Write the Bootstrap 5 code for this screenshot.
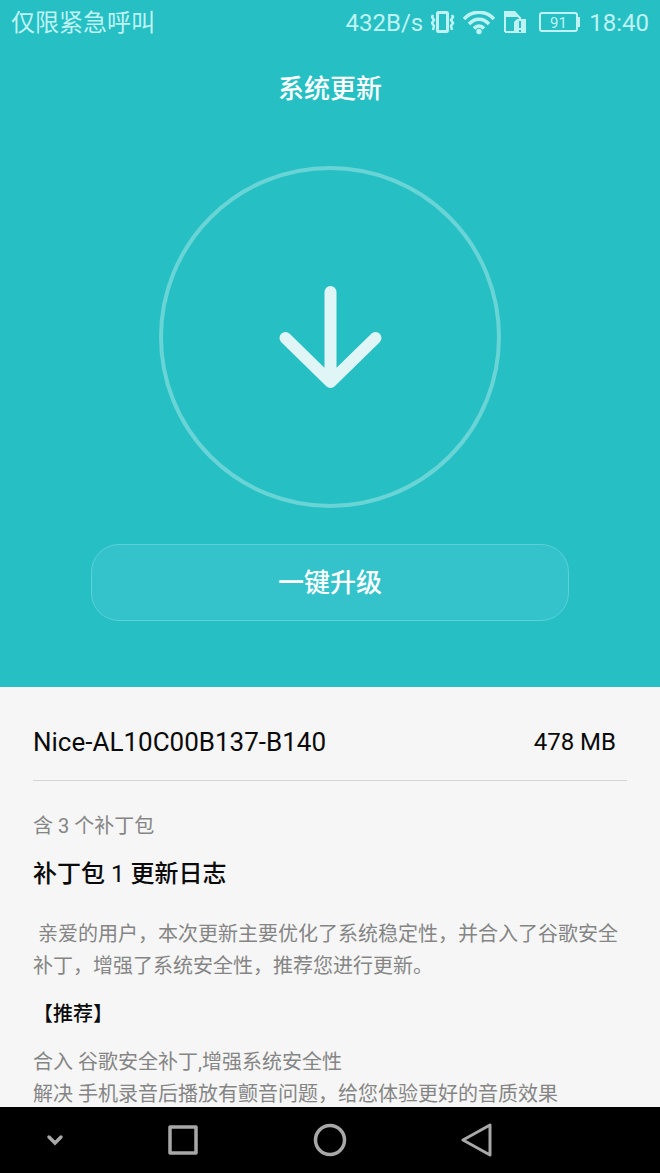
<!DOCTYPE html>
<html lang="zh-CN">
<head>
<meta charset="utf-8">
<meta name="viewport" content="width=device-width, initial-scale=1">
<title>系统更新</title>
<link href="https://cdn.jsdelivr.net/npm/bootstrap@5.3.0/dist/css/bootstrap.min.css" rel="stylesheet">
<style>
  body { font-family: Roboto, "Noto Sans CJK SC", sans-serif; background: #f6f6f6; color: #0a0a0a; }
  .hero { background: #26bfc4; color: #fff; padding-bottom: 66px; }
  .status-bar { height: 46px; padding: 0 11px; font-size: 24px; line-height: 46px; color: #bff3f3; }
  .status-icons { gap: 8px; }
  .page-title { font-size: 26px; line-height: 40px; margin: 23px 0 57px; font-weight: 500; }
  .download-ring { width: 342px; height: 342px; border: 4px solid #69d4d6; }
  .upgrade-wrap { padding: 36px 91px 0; }
  .btn-upgrade { height: 77px; border-radius: 28px; font-size: 26px; font-weight: 500; line-height: 40px; color: #fff; background: #34c3ca; border: 1px solid #5ad2d8; }
  .btn-upgrade:hover { color: #fff; background: #3fcad0; border-color: #5ad2d8; }
  .details { padding: 33px 33px 0; overflow-y: auto; scrollbar-width: none; min-height: 0; }
  .version-row { font-size: 26px; line-height: 44px; padding: 0 11px 16px 0; border-bottom: 1px solid #d4d4d4; }
  .version-size { font-size: 24px; }
  .log-text { font-size: 20px; line-height: 32px; color: #858585; }
  .patch-count { margin: 29px 0 12px; }
  .patch-title { font-size: 24px; line-height: 40px; font-weight: 500; margin: 0 0 24px; }
  .patch-number { font-weight: 400; }
  .log-tag { font-size: 20px; line-height: 32px; font-weight: 500; margin: 16px 0; }
  .system-nav { height: 66px; background: #000; }
  .nav-key { width: 147px; background: none; border: 0; padding: 0; }
  .nav-key-small { width: 109px; }
</style>
</head>
<body>
<div class="vh-100 d-flex flex-column overflow-hidden">
  <header class="hero flex-shrink-0">
    <div class="status-bar d-flex justify-content-between">
      <span>仅限紧急呼叫</span>
      <div class="status-icons d-flex align-items-center">
        <span>432B/s</span>
        <svg width="24" height="24" viewBox="0 0 24 24" fill="none" stroke="currentColor" stroke-width="2" aria-label="振动"><rect x="6.500" y="1.500" width="10" height="19" rx="1" stroke-width="3"/><path d="M2 4l-1 2 2 3-2 3 2 3-1 4M21 4l1 2-2 3 2 3-2 3 1 4" stroke-width="2.500"/></svg>
        <svg width="32" height="24" viewBox="0 0 32 24" fill="none" stroke="currentColor" stroke-width="3.500" aria-label="无线网络"><path d="M1 8C9 -1 23 -1 31 8M6 13C12 6.500 20 6.500 26 13M11 17.500C14 14 18 14 21 17.500"/><circle cx="16" cy="20.500" r="2.700" fill="currentColor" stroke="none"/></svg>
        <svg width="28" height="24" viewBox="0 0 28 24" fill="none" aria-label="存储卡"><path d="M2 21V2h10l5 5v3M2 21h10" stroke="currentColor" stroke-width="2"/><path d="M1 0h11l5 6H1z" fill="currentColor"/><path d="M11 11l3-3h9v14H11z" fill="currentColor"/><path d="M17 10v7M17 19v2" stroke="#26bfc4" stroke-width="2"/></svg>
        <svg width="42" height="24" viewBox="0 0 42 24" aria-label="电量 91"><rect x="1" y="2" width="37" height="18" rx="2" fill="none" stroke="currentColor" stroke-width="2"/><path d="M38 6h3v10h-3z" fill="currentColor"/><text x="19.500" y="17" text-anchor="middle" font-size="15" fill="currentColor">91</text></svg>
        <span>18:40</span>
      </div>
    </div>
    <h1 class="page-title text-center">系统更新</h1>
    <div class="download-ring rounded-circle mx-auto d-flex align-items-center justify-content-center">
      <svg width="104" height="104" viewBox="0 0 104 104" fill="none" stroke="#e0f5f5" stroke-width="12" stroke-linecap="round" stroke-linejoin="round" aria-hidden="true"><path d="M52.500 7V97M7.500 53L52.500 97L97.500 53"/></svg>
    </div>
    <div class="upgrade-wrap"><button type="button" class="btn btn-upgrade w-100">一键升级</button></div>
  </header>
  <main class="details flex-grow-1">
    <div class="version-row d-flex justify-content-between">
      <span>Nice-AL10C00B137-B140</span>
      <span class="version-size">478 MB</span>
    </div>
    <p class="log-text patch-count">含 3 个补丁包</p>
    <h2 class="patch-title">补丁包 <span class="patch-number">1</span> 更新日志</h2>
    <p class="log-text mb-0">&nbsp;亲爱的用户，本次更新主要优化了系统稳定性，并合入了谷歌安全补丁，增强了系统安全性，推荐您进行更新。</p>
    <h3 class="log-tag">【推荐】</h3>
    <p class="log-text mb-0">合入 谷歌安全补丁,增强系统安全性<br>解决 手机录音后播放有颤音问题，给您体验更好的音质效果</p>
  </main>
  <nav class="system-nav d-flex flex-shrink-0" aria-label="系统导航">
    <button type="button" class="nav-key nav-key-small" aria-label="收起"><svg width="20" height="20" viewBox="0 0 20 20" fill="none" stroke="#a8a8a8" stroke-width="3.500" stroke-linecap="round"><path d="M4 6l6 6 6-6"/></svg></button>
    <button type="button" class="nav-key" aria-label="最近任务"><svg width="32" height="32" viewBox="0 0 32 32" fill="none" stroke="#a8a8a8" stroke-width="3.500" stroke-linejoin="round"><rect x="3" y="3" width="26" height="26"/></svg></button>
    <button type="button" class="nav-key" aria-label="主屏幕"><svg width="34" height="34" viewBox="0 0 34 34" fill="none" stroke="#a8a8a8" stroke-width="3.500"><circle cx="17" cy="17" r="14.500"/></svg></button>
    <button type="button" class="nav-key" aria-label="返回"><svg width="34" height="34" viewBox="0 0 34 34" fill="none" stroke="#a8a8a8" stroke-width="3"><path d="M30 2V32L3 17Z" stroke-linejoin="round"/></svg></button>
  </nav>
</div>
<script src="https://cdn.jsdelivr.net/npm/bootstrap@5.3.0/dist/js/bootstrap.bundle.min.js"></script>
</body>
</html>
